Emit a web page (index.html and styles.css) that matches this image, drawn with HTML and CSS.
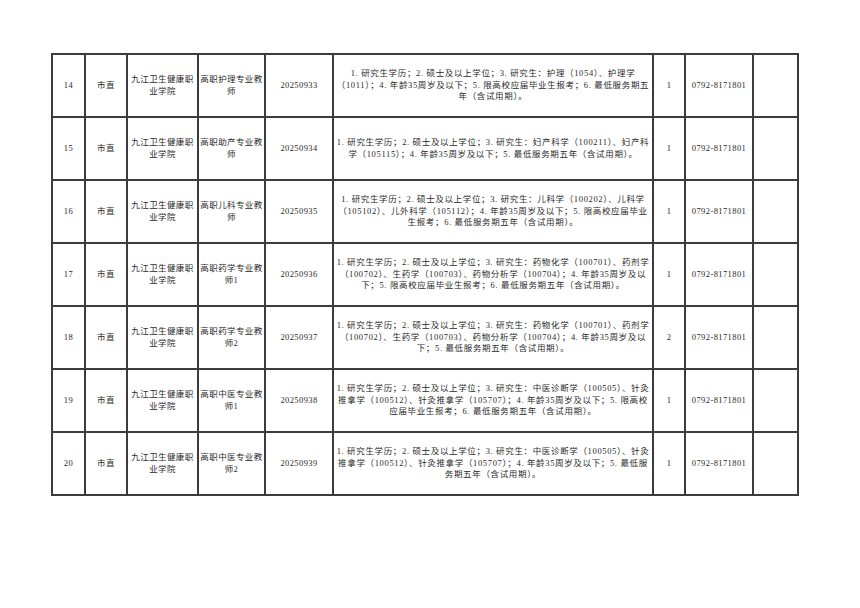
FILE: index.html
```html
<!DOCTYPE html>
<html lang="zh">
<head>
<meta charset="utf-8">
<title>岗位表</title>
<link rel="stylesheet" href="styles.css">
</head>
<body>
<table class="posts">
  <colgroup>
    <col class="c-no"><col class="c-level"><col class="c-unit"><col class="c-post"><col class="c-code"><col class="c-req"><col class="c-num"><col class="c-tel"><col class="c-note">
  </colgroup>
  <tbody>
    <tr>
      <td>14</td><td>市直</td><td class="wrap">九江卫生健康职业学院</td><td class="wrap">高职护理专业教师</td><td>20250933</td>
      <td class="req">1. 研究生学历；2. 硕士及以上学位；3. 研究生：护理（1054）、护理学<br>（1011）；4. 年龄35周岁及以下；5. 限高校应届毕业生报考；6. 最低服务期五<br>年（含试用期）。</td>
      <td>1</td><td>0792-8171801</td><td></td>
    </tr>
    <tr>
      <td>15</td><td>市直</td><td class="wrap">九江卫生健康职业学院</td><td class="wrap">高职助产专业教师</td><td>20250934</td>
      <td class="req">1. 研究生学历；2. 硕士及以上学位；3. 研究生：妇产科学（100211）、妇产科<br>学（105115）；4. 年龄35周岁及以下；5. 最低服务期五年（含试用期）。</td>
      <td>1</td><td>0792-8171801</td><td></td>
    </tr>
    <tr>
      <td>16</td><td>市直</td><td class="wrap">九江卫生健康职业学院</td><td class="wrap">高职儿科专业教师</td><td>20250935</td>
      <td class="req">1. 研究生学历；2. 硕士及以上学位；3. 研究生：儿科学（100202）、儿科学<br>（105102）、儿外科学（105112）；4. 年龄35周岁及以下；5. 限高校应届毕业<br>生报考；6. 最低服务期五年（含试用期）。</td>
      <td>1</td><td>0792-8171801</td><td></td>
    </tr>
    <tr>
      <td>17</td><td>市直</td><td class="wrap">九江卫生健康职业学院</td><td class="wrap">高职药学专业教师1</td><td>20250936</td>
      <td class="req">1. 研究生学历；2. 硕士及以上学位；3. 研究生：药物化学（100701）、药剂学<br>（100702）、生药学（100703）、药物分析学（100704）；4. 年龄35周岁及以<br>下；5. 限高校应届毕业生报考；6. 最低服务期五年（含试用期）。</td>
      <td>1</td><td>0792-8171801</td><td></td>
    </tr>
    <tr>
      <td>18</td><td>市直</td><td class="wrap">九江卫生健康职业学院</td><td class="wrap">高职药学专业教师2</td><td>20250937</td>
      <td class="req">1. 研究生学历；2. 硕士及以上学位；3. 研究生：药物化学（100701）、药剂学<br>（100702）、生药学（100703）、药物分析学（100704）；4. 年龄35周岁及以<br>下；5. 最低服务期五年（含试用期）。</td>
      <td>2</td><td>0792-8171801</td><td></td>
    </tr>
    <tr>
      <td>19</td><td>市直</td><td class="wrap">九江卫生健康职业学院</td><td class="wrap">高职中医专业教师1</td><td>20250938</td>
      <td class="req">1. 研究生学历；2. 硕士及以上学位；3. 研究生：中医诊断学（100505）、针灸<br>推拿学（100512）、针灸推拿学（105707）；4. 年龄35周岁及以下；5. 限高校<br>应届毕业生报考；6. 最低服务期五年（含试用期）。</td>
      <td>1</td><td>0792-8171801</td><td></td>
    </tr>
    <tr>
      <td>20</td><td>市直</td><td class="wrap">九江卫生健康职业学院</td><td class="wrap">高职中医专业教师2</td><td>20250939</td>
      <td class="req">1. 研究生学历；2. 硕士及以上学位；3. 研究生：中医诊断学（100505）、针灸<br>推拿学（100512）、针灸推拿学（105707）；4. 年龄35周岁及以下；5. 最低服<br>务期五年（含试用期）。</td>
      <td>1</td><td>0792-8171801</td><td></td>
    </tr>
  </tbody>
</table>
</body>
</html>
```

FILE: styles.css
```css
html, body {
  margin: 0;
  padding: 0;
  background: #ffffff;
}

body {
  padding: 53px 0 0 51px;
  font-family: "Liberation Serif", "Noto Sans CJK SC", serif;
  color: #2a2a2a;
}

.posts {
  border-collapse: collapse;
  table-layout: fixed;
  width: 748px;
  border: 2px solid #333333;
}

.c-no { width: 33px; }
.c-level { width: 42px; }
.c-unit { width: 71px; }
.c-post { width: 67px; }
.c-code { width: 68px; }
.c-req { width: 320px; }
.c-num { width: 32px; }
.c-tel { width: 68px; }
.c-note { width: 45px; }

.posts td {
  border: 2px solid #3c3c3c;
  height: 61px;
  padding: 0;
  text-align: center;
  vertical-align: middle;
  font-size: 8.5px;
  line-height: 11.5px;
  letter-spacing: 0.4px;
  white-space: nowrap;
}

.posts td.wrap {
  white-space: normal;
  padding: 0;
}

.posts td.req {
  white-space: nowrap;
  letter-spacing: 0.65px;
}
```
